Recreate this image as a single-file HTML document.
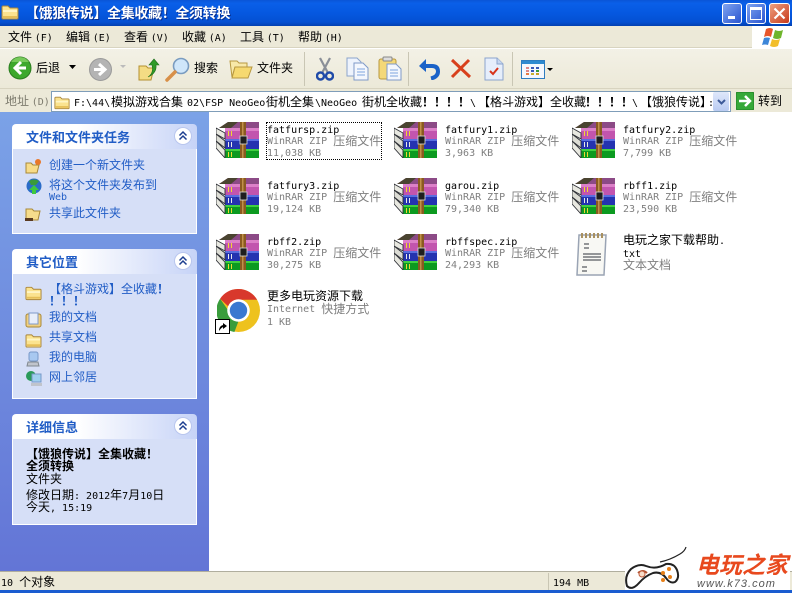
<!DOCTYPE html>
<html><head><meta charset="utf-8"><style>
html,body{margin:0;padding:0}
body{width:792px;height:593px;position:relative;overflow:hidden;background:#fff;font-family:"WenQuanYi Zen Hei","Noto Sans CJK SC",sans-serif;font-size:12px;color:#000}
div,svg{position:absolute}
.t{white-space:nowrap;line-height:12px;height:12px}
i{font-style:normal;font-family:"DejaVu Sans Mono","Liberation Mono",monospace;font-size:10px}
.g{color:#7f7f7f}
.g i{position:relative;top:-1px}
.b{color:#215dc6}
.h{font-weight:bold;color:#215dc6}
.sep{width:1px;background:#c9c6b4}
.panel{left:12px;width:185px;background:#d6dff7;border:1px solid #fff;border-top:0;box-sizing:border-box}
.head{left:12px;width:185px;height:25px;background:linear-gradient(90deg,#fff 0%,#fff 35%,#c6d3f7 100%);border-radius:4px 4px 0 0}
u{text-decoration:none;font-weight:bold}
</style></head><body>
<svg width="0" height="0" style="left:0;top:0">
<defs>
<symbol id="rar" viewBox="0 0 44 36">
<path d="M3 6 12 0h31v6z" fill="#8c4a86"/><path d="M3 6 12 0h10L15 6z" fill="#4a4430"/>
<path d="M9 6h34v11H9z" fill="#c255ae"/><path d="M9 6h34v3H9z" fill="#dc80c8"/>
<path d="M9 17h34v10H9z" fill="#2433b0"/><path d="M9 17h34v2H9z" fill="#5a6ee0"/>
<path d="M9 27h34v9H9z" fill="#0c9a20"/><path d="M9 27h34v2H9z" fill="#40d040"/>
<path d="M0 6 9 11v6L0 12z" fill="#e8e8e0" stroke="#2e3036" stroke-width=".9"/>
<path d="M0 12 9 19v7L0 19z" fill="#dcdcd4" stroke="#2e3036" stroke-width=".9"/>
<path d="M0 19 9 28v8L0 26z" fill="#e8e8e0" stroke="#2e3036" stroke-width=".9"/>
<path d="M24 0h6v36h-6z" fill="#8a5a20"/><path d="M26 0h1.500v36H26z" fill="#c0904a"/>
<rect x="24" y="14" width="7" height="8" fill="#1e1e1e" stroke="#ddd" stroke-width=".8"/>
<path d="M12 9h1v5h-1zM15 9h1v5h-1z" fill="#f0d830"/><path d="M12 20h1v5h-1zM15 20h1v5h-1z" fill="#e8e8e8"/><path d="M12 30h1v5h-1zM15 30h1v5h-1z" fill="#f0d830"/>
</symbol>
<symbol id="folder" viewBox="0 0 18 16">
<path d="M1 3q0-1 1-1h5l2 2h7q1 0 1 1v9q0 1-1 1H2q-1 0-1-1z" fill="#fbe38f" stroke="#a9853a"/>
<path d="M2 6h14v2H2z" fill="#fff5c4"/><path d="M2 12h14v2H2z" fill="#e6bf58"/>
</symbol>
<symbol id="chev" viewBox="0 0 18 18">
<circle cx="9" cy="9" r="8.500" fill="#fff" stroke="#b9c6ee"/>
<path d="M5.500 8.500 9 5l3.500 3.500M5.500 12.500 9 9l3.500 3.500" fill="none" stroke="#1c3d8f" stroke-width="1.500"/>
</symbol>
</defs></svg>

<!-- Title bar -->
<div style="left:0;top:0;width:792px;height:26px;background:linear-gradient(180deg,#0a55d6 0%,#0a5fe8 12%,#0558e0 50%,#0450d2 85%,#0340b0 100%)"></div>
<svg style="left:1px;top:4px" width="18" height="16"><use href="#folder"/></svg>
<div class="t" style="left:25px;top:6px;color:#fff;font-weight:bold;font-size:14px;letter-spacing:-.33px;line-height:14px;height:14px;text-shadow:1px 1px #0a2f90">【饿狼传说】全集收藏！全须转换</div>
<div style="left:722px;top:3px;width:18px;height:19px;border:1px solid #fff;border-radius:3px;background:linear-gradient(135deg,#7fa4f0,#2a55d0)"><div style="left:5px;top:12px;width:7px;height:3px;background:#fff"></div></div>
<div style="left:746px;top:3px;width:18px;height:19px;border:1px solid #fff;border-radius:3px;background:linear-gradient(135deg,#7fa4f0,#2a55d0)"><div style="left:3px;top:3px;width:10px;height:9px;border:1px solid #fff;border-top-width:3px"></div></div>
<div style="left:769px;top:3px;width:19px;height:19px;border:1px solid #fff;border-radius:3px;background:linear-gradient(135deg,#eea080,#c83a1c)"><svg style="left:3px;top:3px" width="13" height="13"><path d="M1.500 1.500l10 10M11.500 1.500l-10 10" stroke="#fff" stroke-width="2.200"/></svg></div>

<!-- Menu -->
<div style="left:0;top:26px;width:792px;height:22px;background:#ece9d8;border-bottom:1px solid #d8d4c0;box-sizing:border-box"></div>
<div class="t" style="left:8px;top:31px">文件 <i>(F)</i></div>
<div class="t" style="left:66px;top:31px">编辑 <i>(E)</i></div>
<div class="t" style="left:124px;top:31px">查看 <i>(V)</i></div>
<div class="t" style="left:182px;top:31px">收藏 <i>(A)</i></div>
<div class="t" style="left:240px;top:31px">工具 <i>(T)</i></div>
<div class="t" style="left:298px;top:31px">帮助 <i>(H)</i></div>
<div style="left:752px;top:26px;width:40px;height:23px;background:#fff"></div>
<svg style="left:762px;top:27px" width="22" height="20"><path d="M4 2q4-2 7 0l-2 8q-3-2-7 0z" fill="#e8562a"/><path d="M13 3q4 2 8 0l-2 8q-4 2-8 0z" fill="#6fb52c"/><path d="M2 11q3-1 6 0l-2 7q-3-1-6 0z" fill="#3c86d8"/><path d="M10 12q4 2 8 0l-2 7q-4 2-8 0z" fill="#f2be2a"/></svg>

<!-- Toolbar -->
<div style="left:0;top:49px;width:792px;height:40px;background:linear-gradient(180deg,#f3f1e6,#ece9d8);border-bottom:1px solid #d8d4c0;box-sizing:border-box"></div>
<svg style="left:8px;top:56px" width="24" height="24"><circle cx="12" cy="12" r="11" fill="#3da82c" stroke="#2a7c1e"/><path d="M12 1a11 11 0 0 1 9 5H3a11 11 0 0 1 9-5z" fill="#8fd86c" opacity=".7"/><path d="M13 6 7 12l6 6M7 12h11" fill="none" stroke="#fff" stroke-width="3"/></svg>
<div class="t" style="left:36px;top:62px">后退</div>
<svg style="left:69px;top:65px" width="8" height="5"><path d="M0 0h7L3.500 4z" fill="#000"/></svg>
<svg style="left:89px;top:58px" width="23" height="23"><circle cx="11.500" cy="11.500" r="11" fill="#b4b4b4" stroke="#9a9a9a"/><path d="M10 6l6 5.500-6 5.500M16 11.500H5" fill="none" stroke="#fff" stroke-width="3"/></svg>
<svg style="left:120px;top:65px" width="7" height="4"><path d="M0 0h6L3 3z" fill="#bbb"/></svg>
<svg style="left:138px;top:57px" width="22" height="24"><path d="M1 9h7l2 2h6l-3 12H1z" fill="#f4dc84" stroke="#b49030"/><path d="M10 20q6-4 4-12h-3l5-6 5 6h-3q1 8-8 12z" fill="#2f9a28" stroke="#1d6e1a" stroke-width=".6"/></svg>
<svg style="left:165px;top:57px" width="26" height="25"><circle cx="16" cy="9" r="7.500" fill="#cfe6fa" stroke="#7a9cc0" stroke-width="1.600"/><path d="M10 15 2 23" stroke="#d89048" stroke-width="3.500" stroke-linecap="round"/></svg>
<div class="t" style="left:194px;top:62px">搜索</div>
<svg style="left:229px;top:57px" width="24" height="24"><path d="M1 4h7l2 2h8v4H6L3 20z" fill="#f8e8a8" stroke="#b89840"/><path d="M6 10h17l-4 11H3z" fill="#f6d970" stroke="#b89840"/></svg>
<div class="t" style="left:257px;top:62px">文件夹</div>
<div class="sep" style="left:304px;top:52px;height:34px"></div>
<svg style="left:316px;top:57px" width="18" height="24"><path d="M4 1 12 16M14 1 6 16" stroke="#8a8f98" stroke-width="2.200"/><circle cx="4.500" cy="19" r="3.500" fill="none" stroke="#1f4aa8" stroke-width="2.400"/><circle cx="13.500" cy="19" r="3.500" fill="none" stroke="#1f4aa8" stroke-width="2.400"/></svg>
<svg style="left:346px;top:57px" width="23" height="24"><path d="M1 1h10l4 4v14H1z" fill="#eef3fc" stroke="#8ca4cc"/><path d="M8 6h9l5 5v12H8z" fill="#f4f7fd" stroke="#7f9ac8"/><path d="M11 12h8M11 15h8M11 18h8" stroke="#7ea6e0"/></svg>
<svg style="left:378px;top:56px" width="24" height="25"><rect x="1" y="3" width="17" height="20" rx="2" fill="#f4d878" stroke="#b89840"/><rect x="5" y="1" width="9" height="4" rx="1" fill="#ddd" stroke="#888"/><path d="M9 8h9l5 5v11H9z" fill="#f4f7fd" stroke="#7f9ac8"/><path d="M12 14h8M12 17h8M12 20h8" stroke="#7ea6e0"/></svg>
<div class="sep" style="left:408px;top:52px;height:34px"></div>
<svg style="left:417px;top:57px" width="24" height="23"><path d="M4 9h11q6 0 6 5.500c0 4-3 6-7 7" fill="none" stroke="#1a62c8" stroke-width="4"/><path d="M9 2 2 9l7 6z" fill="#1a62c8"/></svg>
<svg style="left:450px;top:58px" width="22" height="21"><path d="M2 2l18 17M19 2 2 19" stroke="#d8401c" stroke-width="3"/></svg>
<svg style="left:484px;top:57px" width="20" height="24"><path d="M1 1h12l6 6v16H1z" fill="#e6eefb" stroke="#8ca4cc"/><path d="M13 1v6h6" fill="#c6d6f0" stroke="#8ca4cc"/><path d="M6 14l3 3 5-6" fill="none" stroke="#d8341c" stroke-width="2"/></svg>
<div class="sep" style="left:512px;top:52px;height:34px"></div>
<svg style="left:521px;top:60px" width="24" height="19"><rect x=".5" y=".5" width="23" height="18" fill="#f4f7fd" stroke="#2e7cc0"/><rect x="1" y="1" width="22" height="3" fill="#2e8ad0"/><path d="M5 7h3v2H5zM5 10h3v2H5z" fill="#d88" /><path d="M10 7h3v2h-3zM10 10h3v2h-3zM15 7h3v2h-3z" fill="#3858b8"/><path d="M15 10h3v2h-3z" fill="#3a9a3a"/><path d="M5 13h3v2H5z" fill="#e87a40"/><path d="M10 13h3v2h-3z" fill="#c8b030"/><path d="M15 13h3v2h-3z" fill="#c8a020"/></svg>
<svg style="left:547px;top:68px" width="7" height="4"><path d="M0 0h6L3 3z" fill="#000"/></svg>

<!-- Address -->
<div style="left:0;top:89px;width:792px;height:23px;background:#ece9d8"></div>
<div class="t" style="left:5px;top:95px;color:#7d7b6e">地址 <i>(D)</i></div>
<div style="left:51px;top:91px;width:680px;height:21px;background:#fff;border:1px solid #7f9db9;box-sizing:border-box"></div>
<svg style="left:54px;top:95px" width="16" height="15"><use href="#folder"/></svg>
<div class="t" style="left:74px;top:96px"><i>F:\44\</i></div>
<div class="t" style="left:111px;top:96px">模拟游戏合集</div>
<div class="t" style="left:187px;top:96px"><i>02\FSP NeoGeo</i></div>
<div class="t" style="left:266px;top:96px">街机全集</div>
<div class="t" style="left:315px;top:96px"><i>\NeoGeo</i></div>
<div class="t" style="left:362px;top:96px">街机全收藏</div>
<div class="t" style="left:422px;top:96px"><u>！！！！</u></div>
<div class="t" style="left:470px;top:96px"><i>\</i></div>
<div class="t" style="left:478px;top:96px">【格斗游戏】全收藏</div>
<div class="t" style="left:585px;top:96px"><u>！！！！</u></div>
<div class="t" style="left:632px;top:96px"><i>\</i></div>
<div class="t" style="left:640px;top:96px">【饿狼传说】</div>
<div class="t" style="left:708px;top:96px"><i>:</i></div>
<div style="left:713px;top:92px;width:16px;height:19px;background:linear-gradient(180deg,#dfe8fb,#b9cbf2);border-radius:2px"></div>
<svg style="left:717px;top:99px" width="9" height="7"><path d="M1 1 4.500 4.500 8 1" fill="none" stroke="#3d5a98" stroke-width="2"/></svg>
<svg style="left:736px;top:92px" width="18" height="18"><rect width="18" height="18" rx="2" fill="#36a838" stroke="#1e7c22"/><path d="M3 9h10M9 4l5 5-5 5" fill="none" stroke="#fff" stroke-width="2.500"/></svg>
<div class="t" style="left:758px;top:95px">转到</div>

<!-- Left pane -->
<div style="left:0;top:112px;width:209px;height:459px;background:linear-gradient(180deg,#7ba2e7,#6375d6)"></div>

<div class="head" style="top:124px"></div>
<div class="t h" style="left:26px;top:130px;font-size:13px;line-height:13px">文件和文件夹任务</div>
<svg style="left:174px;top:127px" width="18" height="18"><use href="#chev"/></svg>
<div class="panel" style="top:149px;height:85px"></div>
<svg style="left:25px;top:158px" width="17" height="16"><path d="M1 5h5l2 2h6l-2 8H1z" fill="#f8dc88" stroke="#a88838"/><circle cx="13" cy="4" r="3" fill="#e8782a"/></svg>
<div class="t b" style="left:49px;top:159px">创建一个新文件夹</div>
<svg style="left:26px;top:178px" width="16" height="16"><circle cx="8" cy="8" r="7.500" fill="#2a6cc8"/><path d="M3 3q5-3 10 0l-3 4H5z" fill="#3a9a3a"/><path d="M8 7l5 5h-3v4H6v-4H3z" fill="#3ec83e"/></svg>
<div class="t b" style="left:49px;top:179px">将这个文件夹发布到</div>
<div class="t b" style="left:49px;top:190px"><i>Web</i></div>
<svg style="left:25px;top:206px" width="17" height="16"><path d="M1 3h6l2 2h6l-2 9H1z" fill="#f6dc8c" stroke="#a88838"/><path d="M0 12h8v3H0z" fill="#5a3a20"/></svg>
<div class="t b" style="left:49px;top:207px">共享此文件夹</div>

<div class="head" style="top:249px"></div>
<div class="t h" style="left:26px;top:255px;font-size:13px;line-height:13px">其它位置</div>
<svg style="left:174px;top:252px" width="18" height="18"><use href="#chev"/></svg>
<div class="panel" style="top:274px;height:125px"></div>
<svg style="left:25px;top:285px" width="17" height="16"><use href="#folder"/></svg>
<div class="t b" style="left:49px;top:283px">【格斗游戏】全收藏<u>！</u></div>
<div class="t b" style="left:49px;top:295px"><u>！！！</u></div>
<svg style="left:25px;top:312px" width="17" height="16"><rect x="1" y="2" width="15" height="13" rx="2" fill="#f0cf80" stroke="#a88838"/><rect x="4" y="1" width="9" height="11" fill="#e8eefa" stroke="#7f9ac8"/></svg>
<div class="t b" style="left:49px;top:311px">我的文档</div>
<svg style="left:25px;top:333px" width="17" height="15"><use href="#folder"/></svg>
<div class="t b" style="left:49px;top:331px">共享文档</div>
<svg style="left:25px;top:351px" width="17" height="17"><rect x="4" y="1" width="9" height="9" rx="2" fill="#a8c8f0" stroke="#7898c8"/><path d="M3 11h10l1 4H2z" fill="#c0c4cc" stroke="#808890"/></svg>
<div class="t b" style="left:49px;top:351px">我的电脑</div>
<svg style="left:25px;top:370px" width="18" height="17"><circle cx="6" cy="6" r="5" fill="#2a9a5a"/><rect x="7" y="4" width="9" height="8" fill="#9fd0f0" stroke="#7898c8"/><path d="M6 13h11v3H6z" fill="#c0c4cc"/></svg>
<div class="t b" style="left:49px;top:371px">网上邻居</div>

<div class="head" style="top:414px"></div>
<div class="t h" style="left:26px;top:420px;font-size:13px;line-height:13px">详细信息</div>
<svg style="left:174px;top:417px" width="18" height="18"><use href="#chev"/></svg>
<div class="panel" style="top:439px;height:86px"></div>
<div class="t" style="left:26px;top:448px;font-weight:bold">【饿狼传说】全集收藏！</div>
<div class="t" style="left:26px;top:460px;font-weight:bold">全须转换</div>
<div class="t" style="left:26px;top:473px">文件夹</div>
<div class="t" style="left:26px;top:489px">修改日期<i>: 2012</i>年<i>7</i>月<i>10</i>日</div>
<div class="t" style="left:26px;top:501px">今天<i>, 15:19</i></div>

<!-- Files -->
<svg style="left:216px;top:122px" width="44" height="36"><use href="#rar"/></svg>
<svg style="left:394px;top:122px" width="44" height="36"><use href="#rar"/></svg>
<svg style="left:572px;top:122px" width="44" height="36"><use href="#rar"/></svg>
<svg style="left:216px;top:178px" width="44" height="36"><use href="#rar"/></svg>
<svg style="left:394px;top:178px" width="44" height="36"><use href="#rar"/></svg>
<svg style="left:572px;top:178px" width="44" height="36"><use href="#rar"/></svg>
<svg style="left:216px;top:234px" width="44" height="36"><use href="#rar"/></svg>
<svg style="left:394px;top:234px" width="44" height="36"><use href="#rar"/></svg>

<div style="left:266px;top:122px;width:116px;height:38px;border:1px dotted #000;box-sizing:border-box"></div>
<div class="t" style="left:267px;top:123px"><i>fatfursp.zip</i></div><div class="t g" style="left:267px;top:135px"><i>WinRAR ZIP </i>压缩文件</div><div class="t g" style="left:267px;top:147px"><i>11,038 KB</i></div>
<div class="t" style="left:445px;top:123px"><i>fatfury1.zip</i></div><div class="t g" style="left:445px;top:135px"><i>WinRAR ZIP </i>压缩文件</div><div class="t g" style="left:445px;top:147px"><i>3,963 KB</i></div>
<div class="t" style="left:623px;top:123px"><i>fatfury2.zip</i></div><div class="t g" style="left:623px;top:135px"><i>WinRAR ZIP </i>压缩文件</div><div class="t g" style="left:623px;top:147px"><i>7,799 KB</i></div>

<div class="t" style="left:267px;top:179px"><i>fatfury3.zip</i></div><div class="t g" style="left:267px;top:191px"><i>WinRAR ZIP </i>压缩文件</div><div class="t g" style="left:267px;top:203px"><i>19,124 KB</i></div>
<div class="t" style="left:445px;top:179px"><i>garou.zip</i></div><div class="t g" style="left:445px;top:191px"><i>WinRAR ZIP </i>压缩文件</div><div class="t g" style="left:445px;top:203px"><i>79,340 KB</i></div>
<div class="t" style="left:623px;top:179px"><i>rbff1.zip</i></div><div class="t g" style="left:623px;top:191px"><i>WinRAR ZIP </i>压缩文件</div><div class="t g" style="left:623px;top:203px"><i>23,590 KB</i></div>

<div class="t" style="left:267px;top:235px"><i>rbff2.zip</i></div><div class="t g" style="left:267px;top:247px"><i>WinRAR ZIP </i>压缩文件</div><div class="t g" style="left:267px;top:259px"><i>30,275 KB</i></div>
<div class="t" style="left:445px;top:235px"><i>rbffspec.zip</i></div><div class="t g" style="left:445px;top:247px"><i>WinRAR ZIP </i>压缩文件</div><div class="t g" style="left:445px;top:259px"><i>24,293 KB</i></div>

<svg style="left:576px;top:231px" width="34" height="46"><path d="M3 4h27l-2 40H1z" fill="#f8f8f4" stroke="#9aa4b4" stroke-width="1.500"/><path d="M6 2v5M10 2v5M14 2v5M18 2v5M22 2v5M26 2v5" stroke="#a89060" stroke-width="2"/><path d="M8 13h5M8 17h5M7 23h18M7 26h18M7 29h18M6 36h5M6 40h5" stroke="#30343c"/></svg>
<div class="t" style="left:623px;top:234px">电玩之家下载帮助<i>.</i></div>
<div class="t" style="left:623px;top:247px"><i>txt</i></div>
<div class="t g" style="left:623px;top:259px">文本文档</div>

<svg style="left:217px;top:289px" width="43" height="43" viewBox="0 0 42 42">
<circle cx="21" cy="21" r="21" fill="#eec21e"/>
<path d="M21 0A21 21 0 0 1 39.200 10.500H21A10.500 10.500 0 0 0 11 17L3 9.500A21 21 0 0 1 21 0z" fill="#d8382c"/>
<path d="M3 9.500 11 21a10.500 10.500 0 0 0 10 10.500L17 42A21 21 0 0 1 3 9.500z" fill="#3a9c3c"/>
<circle cx="21" cy="21" r="11" fill="#fff"/><circle cx="21" cy="21" r="8.500" fill="#3a78d0"/>
</svg>
<div style="left:215px;top:319px;width:15px;height:15px;background:#fff;border:1px solid #000;box-sizing:border-box"></div>
<svg style="left:217px;top:321px" width="11" height="11"><path d="M2 10q0-5 4-6V2l4 3-4 3V6q-2 1-4 4z" fill="#000"/></svg>
<div class="t" style="left:267px;top:290px">更多电玩资源下载</div>
<div class="t g" style="left:267px;top:303px"><i>Internet </i>快捷方式</div>
<div class="t g" style="left:267px;top:316px"><i>1 KB</i></div>

<!-- Status bar -->
<div style="left:0;top:571px;width:792px;height:19px;background:#ece9d8;border-top:1px solid #b0ae9e;box-sizing:border-box"></div>
<div style="left:0;top:590px;width:792px;height:3px;background:#1a5cd0"></div>
<div class="sep" style="left:548px;top:573px;height:17px"></div>
<div class="t" style="left:1px;top:576px"><i>10 </i>个对象</div>
<div class="t" style="left:553px;top:576px"><i>194 MB</i></div>

<!-- Logo -->
<div style="left:625px;top:546px;width:165px;height:44px;background:#fff"></div>
<svg style="left:624px;top:546px" width="66" height="46" viewBox="0 0 66 46">
<path d="M3 40q-3-10 4-17 8-6 15-3 10 4 20-2 8-1 11 6 3 8-2 12-5 2-9-4-5-7-13-5-8 3-14 10-7 8-12 3z" fill="#fff" stroke="#222" stroke-width="2"/>
<path d="M14 27q5-4 9 0" fill="none" stroke="#b05030" stroke-width="2"/><circle cx="18" cy="28" r="3" fill="#f8dcc8" stroke="#c06040"/>
<circle cx="39" cy="27" r="2" fill="#e88018"/><circle cx="45" cy="23" r="2" fill="#e88018"/><circle cx="46" cy="31" r="2" fill="#e88018"/><circle cx="39" cy="34" r="2" fill="#e88018"/>
<path d="M36 16q10-2 20-8 5-3 6-7" fill="none" stroke="#222" stroke-width="1.200"/>
</svg>
<div class="t" style="left:696px;top:551px;height:24px;line-height:24px;font-size:23px;font-weight:bold;font-style:italic;color:#e8491e">电玩之家</div>
<div class="t" style="left:697px;top:578px;font-family:'Liberation Sans',sans-serif;font-style:italic;font-size:11px;color:#555;letter-spacing:1px">www.k73.com</div>
</body></html>
